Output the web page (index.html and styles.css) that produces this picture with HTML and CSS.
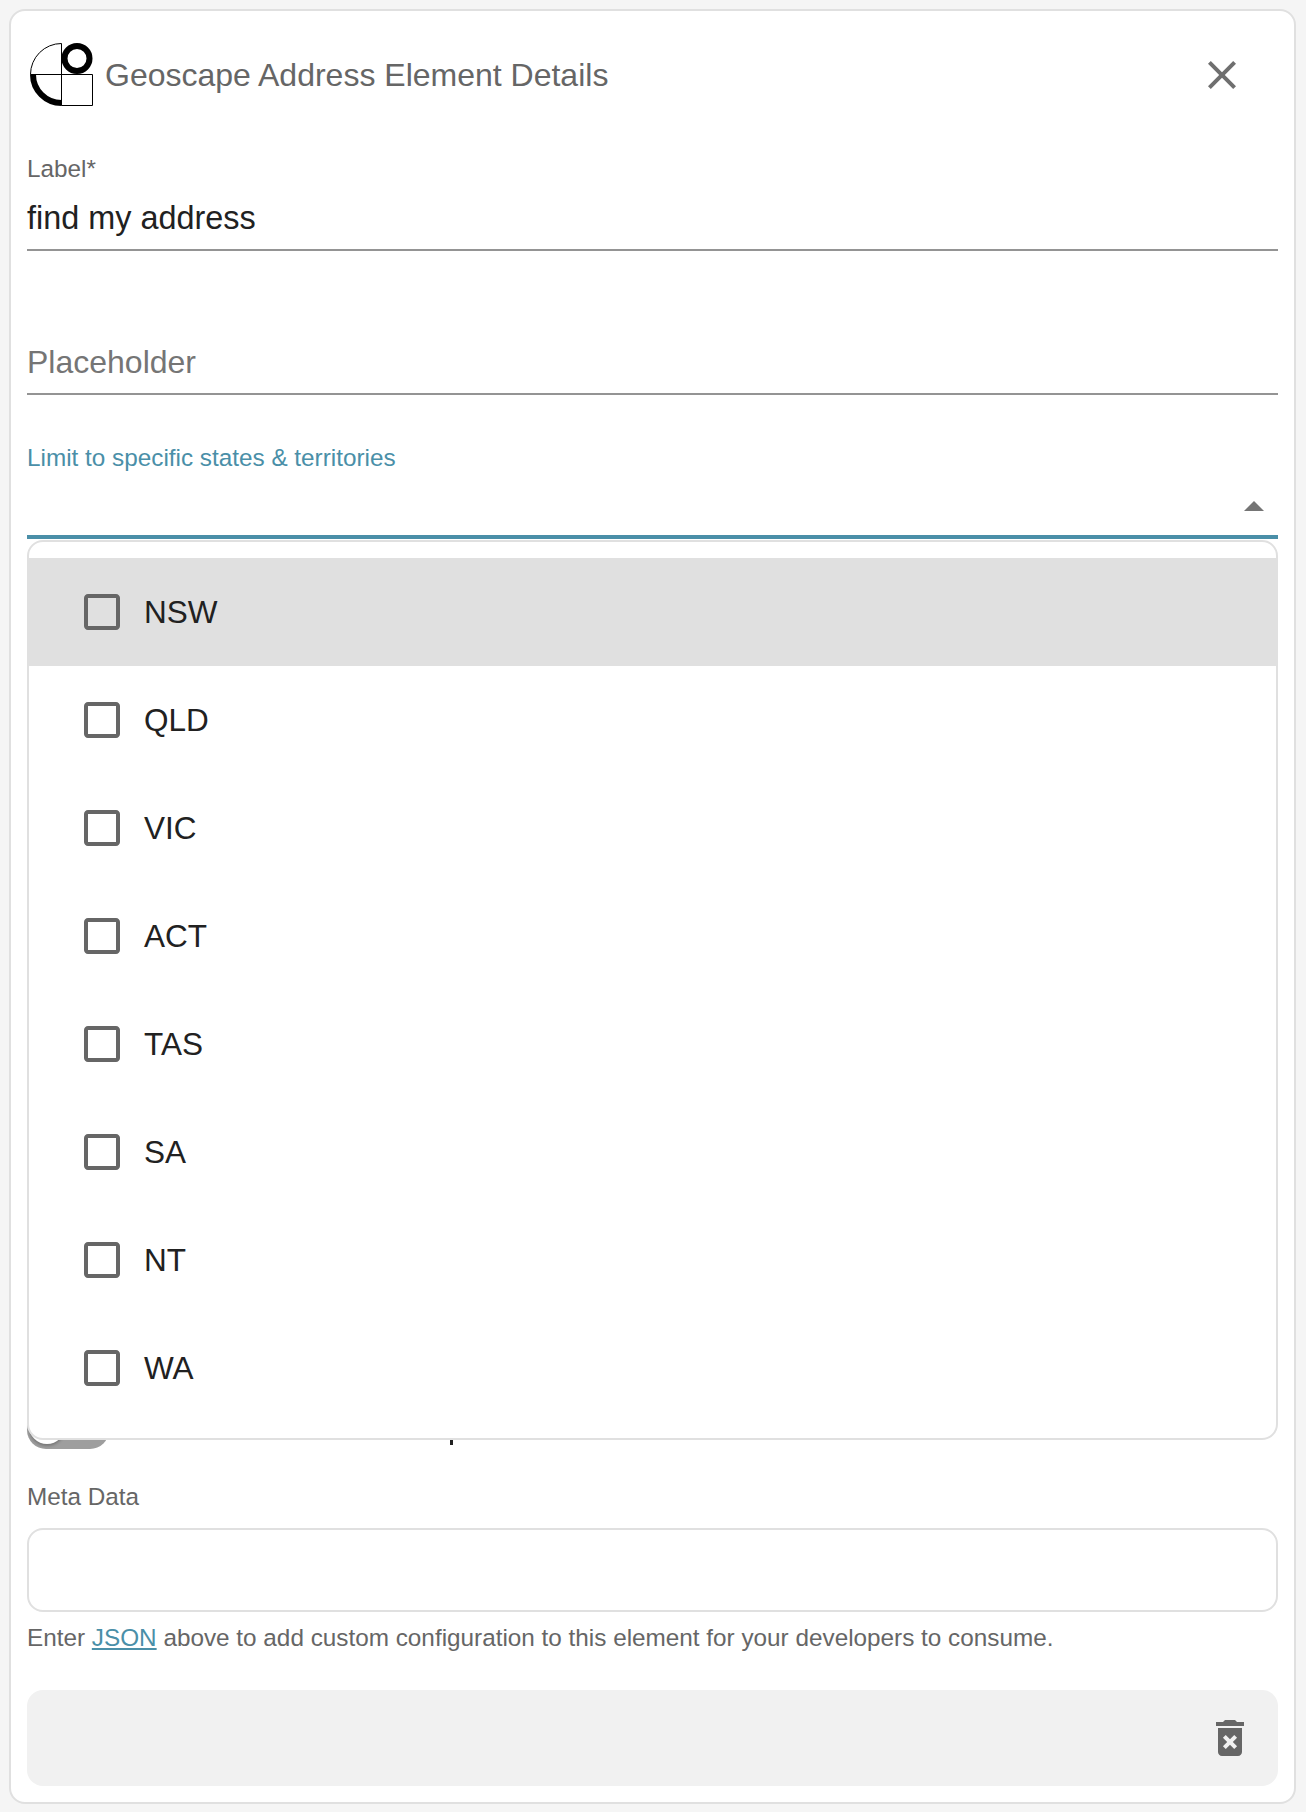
FILE: index.html
```html
<!DOCTYPE html>
<html lang="en">
<head>
    <meta charset="UTF-8">
    <meta name="viewport" content="width=device-width, initial-scale=1.0">
    <title>Geoscape Address Element Details</title>
    <link rel="stylesheet" href="styles.css">
</head>
<body>
    <div class="card">
        <div class="header">
            <svg class="logo" viewBox="0 0 63 63" width="63" height="63">
                <path d="M31.5 .5A31 31 0 0 0 .5 31.5H62.5V62.5H31.5V.5" fill="none" stroke="#000" stroke-width="1"/>
                <path d="M3 31.5A28.5 28.5 0 0 0 31.5 60" fill="none" stroke="#000" stroke-width="6"/>
                <circle cx="47" cy="15.5" r="12.5" fill="none" stroke="#000" stroke-width="6"/>
            </svg>
            <div class="title">Geoscape Address Element Details</div>
            <svg class="icon close" viewBox="0 0 24 24"><path d="M19 6.41L17.59 5 12 10.59 6.41 5 5 6.41 10.59 12 5 17.59 6.41 19 12 13.41 17.59 19 19 17.59 13.41 12z"/></svg>
        </div>

        <div class="field">
            <label class="field-label">Label*</label>
            <div class="field-value">find my address</div>
        </div>

        <div class="field field-placeholder">
            <div class="field-value muted">Placeholder</div>
        </div>

        <div class="field-select">
            <label class="field-label active">Limit to specific states &amp; territories</label>
            <div class="select-box">
                <svg class="icon arrow" viewBox="0 0 24 24"><path d="M7 14l5-5 5 5z"/></svg>
            </div>
            <ul class="menu">
                <li class="menu-item hover">
                    <svg class="icon" viewBox="0 0 24 24"><path d="M19 5v14H5V5h14m0-2H5c-1.1 0-2 .9-2 2v14c0 1.1.9 2 2 2h14c1.1 0 2-.9 2-2V5c0-1.1-.9-2-2-2z"/></svg>
                    NSW
                </li>
                <li class="menu-item">
                    <svg class="icon" viewBox="0 0 24 24"><path d="M19 5v14H5V5h14m0-2H5c-1.1 0-2 .9-2 2v14c0 1.1.9 2 2 2h14c1.1 0 2-.9 2-2V5c0-1.1-.9-2-2-2z"/></svg>
                    QLD
                </li>
                <li class="menu-item">
                    <svg class="icon" viewBox="0 0 24 24"><path d="M19 5v14H5V5h14m0-2H5c-1.1 0-2 .9-2 2v14c0 1.1.9 2 2 2h14c1.1 0 2-.9 2-2V5c0-1.1-.9-2-2-2z"/></svg>
                    VIC
                </li>
                <li class="menu-item">
                    <svg class="icon" viewBox="0 0 24 24"><path d="M19 5v14H5V5h14m0-2H5c-1.1 0-2 .9-2 2v14c0 1.1.9 2 2 2h14c1.1 0 2-.9 2-2V5c0-1.1-.9-2-2-2z"/></svg>
                    ACT
                </li>
                <li class="menu-item">
                    <svg class="icon" viewBox="0 0 24 24"><path d="M19 5v14H5V5h14m0-2H5c-1.1 0-2 .9-2 2v14c0 1.1.9 2 2 2h14c1.1 0 2-.9 2-2V5c0-1.1-.9-2-2-2z"/></svg>
                    TAS
                </li>
                <li class="menu-item">
                    <svg class="icon" viewBox="0 0 24 24"><path d="M19 5v14H5V5h14m0-2H5c-1.1 0-2 .9-2 2v14c0 1.1.9 2 2 2h14c1.1 0 2-.9 2-2V5c0-1.1-.9-2-2-2z"/></svg>
                    SA
                </li>
                <li class="menu-item">
                    <svg class="icon" viewBox="0 0 24 24"><path d="M19 5v14H5V5h14m0-2H5c-1.1 0-2 .9-2 2v14c0 1.1.9 2 2 2h14c1.1 0 2-.9 2-2V5c0-1.1-.9-2-2-2z"/></svg>
                    NT
                </li>
                <li class="menu-item">
                    <svg class="icon" viewBox="0 0 24 24"><path d="M19 5v14H5V5h14m0-2H5c-1.1 0-2 .9-2 2v14c0 1.1.9 2 2 2h14c1.1 0 2-.9 2-2V5c0-1.1-.9-2-2-2z"/></svg>
                    WA
                </li>
            </ul>
        </div>

        <div class="toggle-row">
            <div class="toggle">
                <div class="toggle-knob"></div>
            </div>
            <div class="toggle-text"></div>
        </div>

        <div class="meta">
            <label class="meta-label">Meta Data</label>
            <div class="meta-box"></div>
            <p class="help">Enter <a href="#">JSON</a> above to add custom configuration to this element for your developers to consume.</p>
        </div>

        <div class="footer">
            <svg class="icon" viewBox="0 0 24 24"><path d="M6 19c0 1.1.9 2 2 2h8c1.1 0 2-.9 2-2V7H6v12zm2.46-7.12l1.41-1.41L12 12.59l2.12-2.12 1.41 1.41L13.41 14l2.12 2.12-1.41 1.41L12 15.41l-2.12 2.12-1.41-1.41L10.59 14l-2.13-2.12zM15.5 4l-1-1h-5l-1 1H5v2h14V4z"/></svg>
        </div>
    </div>
</body>
</html>
```

FILE: styles.css
```css
* {
    margin: 0;
    padding: 0;
    box-sizing: border-box;
}
body {
    font-family: 'Liberation Sans', Arial, sans-serif;
    background: #f5f5f5;
    padding: 9px 10px 8px 9px;
}
.card {
    height: 1795px;
    padding: 32px 16px 16px;
    background: #fff;
    border: 2px solid #e0e0e0;
    border-radius: 16px;
}
.icon {
    display: block;
    flex: none;
    width: 48px;
    height: 48px;
    fill: #666;
}
.header {
    display: flex;
    align-items: center;
    height: 63px;
    margin-bottom: 44px;
    padding-left: 3px;
}
.logo {
    flex: none;
    margin-right: 12px;
}
.title {
    flex: 1;
    padding-top: 1px;
    font-size: 32px;
    color: #666;
}
.close {
    margin-right: 32px;
    fill: #6f6f6f;
}
.field {
    border-bottom: 2px solid #949494;
}
.field-placeholder {
    margin-top: 81px;
}
.field-label {
    display: block;
    height: 38px;
    line-height: 38px;
    font-size: 24.3px;
    color: #666;
}
.field-label.active {
    color: #4a8fa8;
}
.field-value {
    height: 61px;
    line-height: 60px;
    font-size: 32.4px;
    color: #212121;
}
.field-value.muted {
    font-size: 32px;
    color: #757575;
}
.field-select {
    position: relative;
    margin-top: 44px;
}
.select-box {
    display: flex;
    justify-content: flex-end;
    height: 62px;
    padding-top: 6px;
    border-bottom: 4px solid #4a8fa8;
}
.arrow {
    fill: #757575;
}
.menu {
    position: absolute;
    z-index: 1;
    top: 100%;
    left: 0;
    right: 0;
    margin-top: 1px;
    padding: 16px 0;
    list-style: none;
    background: #fff;
    border: 2px solid #e0e0e0;
    border-radius: 16px;
}
.menu-item {
    display: flex;
    align-items: center;
    gap: 18px;
    height: 108px;
    padding-left: 49px;
    font-size: 31.5px;
    color: #212121;
}
.menu-item.hover {
    margin: 0 -2px;
    padding-left: 51px;
    background: #e0e0e0;
}
.toggle-row {
    display: flex;
    margin-top: 872px;
    height: 38px;
}
.toggle {
    position: relative;
    width: 82px;
    height: 38px;
    background: #9e9e9e;
    border-radius: 19px;
}
.toggle-knob {
    position: absolute;
    top: -3px;
    left: 2px;
    width: 36px;
    height: 36px;
    background: #fff;
    border-radius: 50%;
    box-shadow: 0 2px 3px rgba(0, 0, 0, .25);
}
.toggle-text {
    width: 3px;
    height: 34px;
    margin-left: 341px;
    background: #212121;
}
.meta {
    margin-top: 29px;
}
.meta-label {
    display: block;
    height: 38px;
    line-height: 38px;
    font-size: 24.3px;
    color: #666;
}
.meta-box {
    height: 84px;
    margin-top: 12px;
    border: 2px solid #e0e0e0;
    border-radius: 16px;
}
.help {
    margin-top: 7px;
    line-height: 38px;
    font-size: 24.3px;
    color: #666;
}
.help a {
    color: #4a8fa8;
}
.footer {
    display: flex;
    align-items: center;
    justify-content: flex-end;
    height: 96px;
    margin-top: 33px;
    padding-right: 24px;
    background: #f1f1f1;
    border-radius: 16px;
}
```
